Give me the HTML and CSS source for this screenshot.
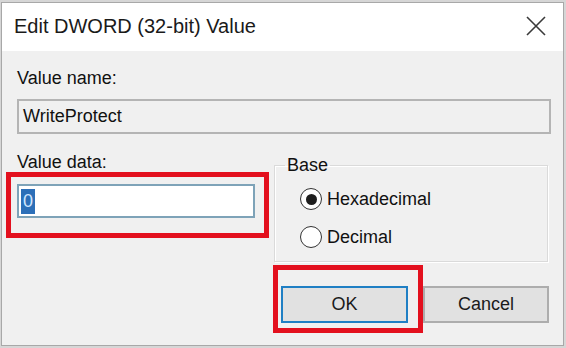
FILE: index.html
```html
<!DOCTYPE html>
<html>
<head>
<meta charset="utf-8">
<link rel="stylesheet" href="styles.css">
</head>
<body>
<div class="dialog">
  <div class="titlebar">
    <span class="title">Edit DWORD (32-bit) Value</span>
    <svg class="close" width="20" height="20" viewBox="0 0 20 20"><path d="M1 1 L19 19 M19 1 L1 19" stroke="#3a3a3a" stroke-width="1.6" fill="none"/></svg>
  </div>
  <div class="content">
    <div class="label name-label">Value name:</div>
    <div class="namebox">WriteProtect</div>
    <div class="row">
      <div class="data-col">
        <div class="label">Value data:</div>
        <div class="red data-red">
          <div class="inputbox"><span class="sel">0</span></div>
        </div>
      </div>
      <fieldset class="base">
        <legend>Base</legend>
        <div class="radio"><span class="circle checked"></span><span>Hexadecimal</span></div>
        <div class="radio"><span class="circle"></span><span>Decimal</span></div>
      </fieldset>
    </div>
    <div class="buttons">
      <div class="red ok-red"><div class="btn ok">OK</div></div>
      <div class="btn">Cancel</div>
    </div>
  </div>
</div>
</body>
</html>
```
FILE: styles.css
```css
* { box-sizing: border-box; }
html, body { margin: 0; padding: 0; }
body {
  width: 566px;
  height: 348px;
  background: #d6d6d6;
  font-family: "Liberation Sans", Arial, sans-serif;
  color: #111;
  overflow: hidden;
}
.dialog {
  margin: 2px 2px 0 1px;
  height: 344px;
  border: 1px solid #a8a8a8;
  background: #f0f0f0;
  display: flex;
  flex-direction: column;
}
.titlebar {
  height: 48px;
  background: #fff;
  display: flex;
  align-items: center;
  justify-content: space-between;
  padding: 0 17px 0 12px;
}
.title {
  font-size: 20px;
  color: #1a1a1a;
  margin-top: -2px;
}
.close { margin-top: -3px; }
.content {
  padding: 0 12px 0 15px;
  font-size: 18px;
}
.label { line-height: 20px; }
.name-label { margin-top: 17px; }
.namebox {
  margin-top: 11px;
  height: 35px;
  border: 2px solid #b4b4b4;
  background: #f0f0f0;
  padding-left: 4px;
  line-height: 31px;
}
.row {
  display: flex;
  margin-top: 14px;
}
.data-col {
  width: 257px;
  padding-top: 4px;
}
.red {
  border: 5px solid #e3101e;
}
.data-red {
  margin-left: -11px;
  width: 263px;
  height: 66px;
  padding: 7px 9px 0 6px;
}
.inputbox {
  height: 34px;
  border: 2px solid #7ea3b8;
  background: #fff;
  padding: 3px 2px;
}
.sel {
  display: inline-block;
  background: #2c6fb8;
  color: #cfe6ff;
  height: 25px;
  line-height: 25px;
  padding: 0 2px;
}
.base {
  margin: 7px 0 0 0;
  width: 274px;
  height: 107px;
  border: 1px solid #dadada;
  box-shadow: 1px 1px 0 #fff inset, 1px 1px 0 #fff;
  padding: 5px 0 0 15px;
}
.base legend {
  padding: 0 2px;
  margin-left: -5px;
  line-height: 20px;
}
.radio {
  display: flex;
  align-items: center;
  height: 38px;
  margin-left: 10px;
}
.circle {
  width: 22px;
  height: 22px;
  border-radius: 50%;
  border: 1.5px solid #333;
  background: #fff;
  margin-right: 5px;
  display: flex;
  align-items: center;
  justify-content: center;
}
.circle.checked::after {
  content: "";
  width: 11px;
  height: 11px;
  border-radius: 50%;
  background: #1e1e1e;
}
.buttons {
  display: flex;
  margin-top: 3px;
  margin-left: 256px;
}
.ok-red {
  width: 150px;
  height: 68px;
  padding: 16px 10px 0 3px;
}
.btn {
  width: 126px;
  height: 37px;
  background: #e1e1e1;
  border: 2px solid #adadad;
  display: flex;
  align-items: center;
  justify-content: center;
  margin-top: 21px;
  color: #1a1a1a;
}
.ok-red .btn {
  width: 127px;
  margin-top: 0;
  border-color: #1f7fc4;
}
```
